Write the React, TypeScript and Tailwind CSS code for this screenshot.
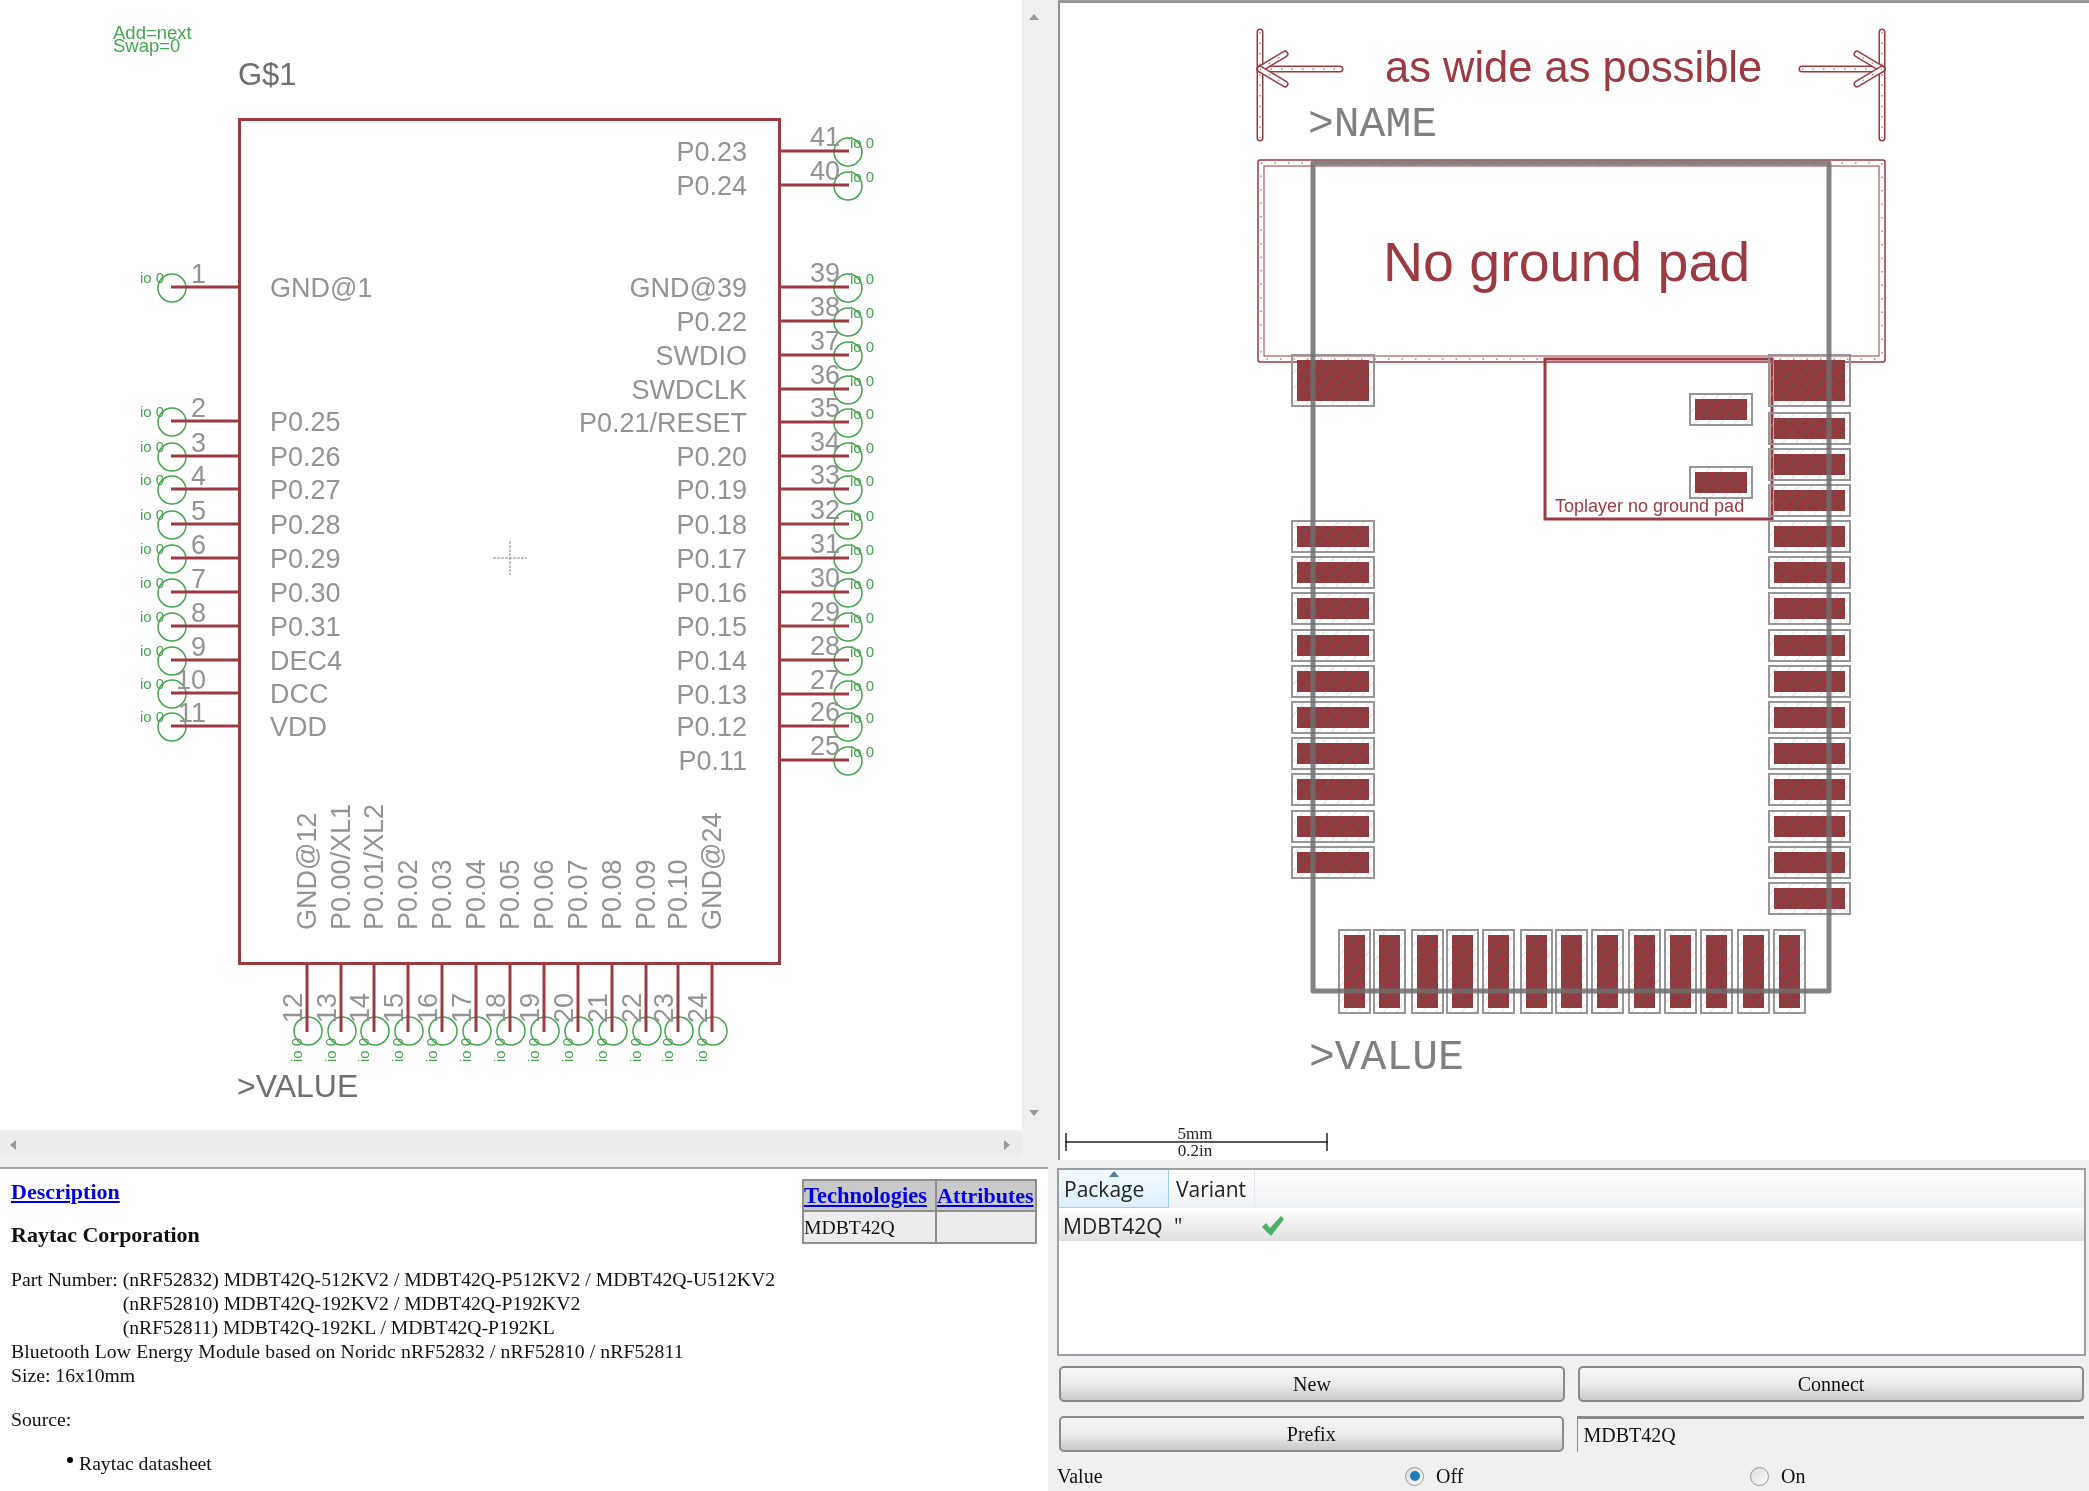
const RED = "#9c3a41";
const GREEN = "#45a64f";
const GREY = "#939393";

const rightTop = [
  { n: 41, y: 151, label: "P0.23" },
  { n: 40, y: 185, label: "P0.24" },
  { n: 39, y: 287, label: "GND@39" },
  { n: 38, y: 321, label: "P0.22" },
  { n: 37, y: 355, label: "SWDIO" },
  { n: 36, y: 389, label: "SWDCLK" },
  { n: 35, y: 422, label: "P0.21/RESET" },
  { n: 34, y: 456, label: "P0.20" },
  { n: 33, y: 489, label: "P0.19" },
  { n: 32, y: 524, label: "P0.18" },
  { n: 31, y: 558, label: "P0.17" },
  { n: 30, y: 592, label: "P0.16" },
  { n: 29, y: 626, label: "P0.15" },
  { n: 28, y: 660, label: "P0.14" },
  { n: 27, y: 694, label: "P0.13" },
  { n: 26, y: 726, label: "P0.12" },
  { n: 25, y: 760, label: "P0.11" },
];

const leftPins = [
  { n: 1, y: 287, label: "GND@1" },
  { n: 2, y: 421, label: "P0.25" },
  { n: 3, y: 456, label: "P0.26" },
  { n: 4, y: 489, label: "P0.27" },
  { n: 5, y: 524, label: "P0.28" },
  { n: 6, y: 558, label: "P0.29" },
  { n: 7, y: 592, label: "P0.30" },
  { n: 8, y: 626, label: "P0.31" },
  { n: 9, y: 660, label: "DEC4" },
  { n: 10, y: 693, label: "DCC" },
  { n: 11, y: 726, label: "VDD" },
];

const bottomPins = [
  { n: 12, x: 307, label: "GND@12" },
  { n: 13, x: 341, label: "P0.00/XL1" },
  { n: 14, x: 374, label: "P0.01/XL2" },
  { n: 15, x: 408, label: "P0.02" },
  { n: 16, x: 442, label: "P0.03" },
  { n: 17, x: 476, label: "P0.04" },
  { n: 18, x: 510, label: "P0.05" },
  { n: 19, x: 544, label: "P0.06" },
  { n: 20, x: 578, label: "P0.07" },
  { n: 21, x: 612, label: "P0.08" },
  { n: 22, x: 646, label: "P0.09" },
  { n: 23, x: 678, label: "P0.10" },
  { n: 24, x: 712, label: "GND@24" },
];

function Schematic() {
  return (
    <svg width="1022" height="1130" viewBox="0 0 1022 1130" className="block font-['Liberation_Sans',sans-serif]">
      <text x="113" y="39" fontSize="18.5" fill={GREEN}>Add=next</text>
      <text x="113" y="52" fontSize="18.5" fill={GREEN}>Swap=0</text>
      <text x="238" y="85" fontSize="31" fill="#6f6f6f">G$1</text>
      <text x="237" y="1097" fontSize="32" fill="#6f6f6f">&gt;VALUE</text>

      {rightTop.map((p) => (
        <g key={p.n}>
          <circle cx="848" cy={p.y + 1} r="14" fill="none" stroke={GREEN} strokeWidth="1.5" />
          <line x1="780" y1={p.y} x2="849" y2={p.y} stroke={RED} strokeWidth="3" />
          <text x="840" y={p.y - 5} fontSize="27" textAnchor="end" fill={GREY}>{p.n}</text>
          <text x="850" y={p.y - 3} fontSize="15" fill={GREEN}>io 0</text>
          <text x="747" y={p.y + 10} fontSize="27" textAnchor="end" fill={GREY}>{p.label}</text>
        </g>
      ))}

      {leftPins.map((p) => (
        <g key={p.n}>
          <circle cx="172" cy={p.y + 1} r="14" fill="none" stroke={GREEN} strokeWidth="1.5" />
          <line x1="171" y1={p.y} x2="239" y2={p.y} stroke={RED} strokeWidth="3" />
          <text x="206" y={p.y - 4} fontSize="27" textAnchor="end" fill={GREY}>{p.n}</text>
          <text x="140" y={p.y - 4} fontSize="15" fill={GREEN}>io 0</text>
          <text x="270" y={p.y + 10} fontSize="27" fill={GREY}>{p.label}</text>
        </g>
      ))}

      {bottomPins.map((p) => (
        <g key={p.n}>
          <circle cx={p.x + 1} cy="1031" r="14" fill="none" stroke={GREEN} strokeWidth="1.5" />
          <line x1={p.x} y1="964" x2={p.x} y2="1032" stroke={RED} strokeWidth="3" />
          <text x={p.x - 5} y="1023" fontSize="27" fill={GREY} transform={`rotate(-90 ${p.x - 5} 1023)`}>{p.n}</text>
          <text x={p.x - 5} y="1062" fontSize="15" fill={GREEN} transform={`rotate(-90 ${p.x - 5} 1062)`}>io 0</text>
          <text x={p.x + 9} y="930" fontSize="27" fill={GREY} transform={`rotate(-90 ${p.x + 9} 930)`}>{p.label}</text>
        </g>
      ))}

      <rect x="239.5" y="119.5" width="540" height="844" fill="none" stroke={RED} strokeWidth="3" />
      <line x1="493" y1="558" x2="527" y2="558" stroke="#8a8a8a" strokeWidth="1" strokeDasharray="3 1" />
      <line x1="510" y1="541" x2="510" y2="575" stroke="#8a8a8a" strokeWidth="1" strokeDasharray="3 1" />
    </svg>
  );
}

const rightPadY = [428, 464, 500, 536, 572, 608, 645, 681, 717, 753, 789, 826, 862, 898];
const leftPadY = [536, 572, 608, 645, 681, 717, 753, 789, 826, 862];
const bottomPadX = [1354, 1389, 1427, 1462, 1498, 1536, 1571, 1607, 1644, 1680, 1716, 1753, 1789];

function Pad({ x, y, w, h, m = 5 }: { x: number; y: number; w: number; h: number; m?: number }) {
  return (
    <g>
      <rect x={x} y={y} width={w} height={h} fill="url(#hatch-light)" stroke="#969696" strokeWidth="2" />
      <rect x={x + m} y={y + m} width={w - m * 2} height={h - m * 2} fill="#943a3f" />
      <rect x={x + m} y={y + m} width={w - m * 2} height={h - m * 2} fill="url(#hatch-dark)" />
    </g>
  );
}

// outlined wire on the dimension layer
function DimLine({ x1, y1, x2, y2, w = 7 }: { x1: number; y1: number; x2: number; y2: number; w?: number }) {
  return (
    <g>
      <line x1={x1} y1={y1} x2={x2} y2={y2} stroke={RED} strokeWidth={w} strokeLinecap="round" />
      <line x1={x1} y1={y1} x2={x2} y2={y2} stroke="#ffffff" strokeWidth={w - 3} strokeLinecap="round" />
      <line x1={x1} y1={y1} x2={x2} y2={y2} stroke={RED} strokeWidth="1" strokeDasharray="1.5 9" />
    </g>
  );
}

function PackageView() {
  return (
    <svg width="1029" height="1157" viewBox="1060 3 1029 1157" className="block font-['Liberation_Sans',sans-serif]">
      <defs>
        <pattern id="hatch-dark" patternUnits="userSpaceOnUse" width="10" height="10" patternTransform="rotate(40)">
          <line x1="0" y1="0" x2="0" y2="10" stroke="#6f4f4f" strokeWidth="3" />
        </pattern>
        <pattern id="hatch-light" patternUnits="userSpaceOnUse" width="10" height="10" patternTransform="rotate(40)">
          <line x1="0" y1="0" x2="0" y2="10" stroke="#c2c2c2" strokeWidth="1" />
        </pattern>
      </defs>

      <DimLine x1={1260} y1={32} x2={1260} y2={138} />
      <DimLine x1={1882} y1={32} x2={1882} y2={138} />
      <DimLine x1={1260} y1={69} x2={1340} y2={69} />
      <DimLine x1={1260} y1={69} x2={1285} y2={54} />
      <DimLine x1={1260} y1={69} x2={1285} y2={84} />
      <DimLine x1={1802} y1={69} x2={1882} y2={69} />
      <DimLine x1={1882} y1={69} x2={1857} y2={54} />
      <DimLine x1={1882} y1={69} x2={1857} y2={84} />

      <text x="1385" y="82" fontSize="43.5" fill={RED}>as wide as possible</text>
      <text x="1308" y="136" fontSize="43" fill="#808080" className="font-['Liberation_Mono',monospace]">&gt;NAME</text>

      <rect x="1258" y="160" width="627" height="202" rx="2" fill="none" stroke={RED} strokeWidth="1.5" />
      <rect x="1261" y="163" width="621" height="196" fill="none" stroke={RED} strokeWidth="1" strokeDasharray="1.5 12" />
      <rect x="1264" y="166" width="615" height="190" fill="none" stroke={RED} strokeWidth="1" />

      <text x="1383" y="281" fontSize="55.5" fill={RED}>No ground pad</text>
      <rect x="1545" y="359" width="227" height="160" fill="none" stroke={RED} strokeWidth="3" />
      <text x="1555" y="512" fontSize="18" fill={RED}>Toplayer no ground pad</text>

      <Pad x={1292} y={355} w={82} h={51} />
      <Pad x={1769} y={355} w={81} h={51} />
      <Pad x={1690} y={394} w={62} h={31} />
      <Pad x={1690} y={467} w={62} h={31} />
      {rightPadY.map((y) => (
        <Pad key={y} x={1769} y={y - 15} w={81} h={31} />
      ))}
      {leftPadY.map((y) => (
        <Pad key={y} x={1292} y={y - 15} w={82} h={31} />
      ))}
      {bottomPadX.map((x) => (
        <Pad key={x} x={x - 15} y={930} w={31} h={83} />
      ))}

      <path d="M1313 163 H1829 V991 H1313 Z" fill="none" stroke="#6f6f6f" strokeOpacity="0.85" strokeWidth="5" strokeLinejoin="round" />

      <text x="1309" y="1069" fontSize="43" fill="#808080" className="font-['Liberation_Mono',monospace]">&gt;VALUE</text>

      <line x1="1065" y1="1142" x2="1328" y2="1142" stroke="#222" strokeWidth="1.5" />
      <line x1="1066" y1="1133" x2="1066" y2="1151" stroke="#222" strokeWidth="1.5" />
      <line x1="1327" y1="1133" x2="1327" y2="1151" stroke="#222" strokeWidth="1.5" />
      <text x="1195" y="1139" fontSize="17" textAnchor="middle" fill="#222" className="font-['Liberation_Serif',serif]">5mm</text>
      <text x="1195" y="1156" fontSize="17" textAnchor="middle" fill="#222" className="font-['Liberation_Serif',serif]">0.2in</text>
    </svg>
  );
}

function Arrow({ dir }: { dir: "up" | "down" | "left" | "right" }) {
  const d = {
    up: "M6 2 L11 8 H1 Z",
    down: "M6 10 L11 4 H1 Z",
    left: "M2 6 L8 1 V11 Z",
    right: "M10 6 L4 1 V11 Z",
  }[dir];
  return (
    <svg width="12" height="12" viewBox="0 0 12 12">
      <path d={d} fill="#9a9a9a" />
    </svg>
  );
}

function DescriptionPanel() {
  return (
    <div className="flex w-[1048px] flex-1 justify-between border-t-2 border-[#a6a6a6] bg-white font-['Liberation_Serif',serif] text-[19.7px] leading-[24px] text-[#111]">
      <div className="pl-[11px] pt-[11px]">
        <div className="text-[22px] font-bold text-[#0000ee] underline">Description</div>
        <div className="mt-[19px] text-[22px] font-bold">Raytac Corporation</div>
        <div className="mt-[20px] flex gap-[5px]">
          <span>Part Number:</span>
          <div>
            <div>(nRF52832) MDBT42Q-512KV2 / MDBT42Q-P512KV2 / MDBT42Q-U512KV2</div>
            <div>(nRF52810) MDBT42Q-192KV2 / MDBT42Q-P192KV2</div>
            <div>(nRF52811) MDBT42Q-192KL / MDBT42Q-P192KL</div>
          </div>
        </div>
        <div className="tracking-[0.11px]">Bluetooth Low Energy Module based on Noridc nRF52832 / nRF52810 / nRF52811</div>
        <div>Size: 16x10mm</div>
        <div className="mt-[20px]">Source:</div>
        <div className="mt-[20px] flex items-start gap-[6px] pl-[56px]">
          <span className="mt-[6px] h-[6px] w-[6px] rounded-full bg-black" />
          <span>Raytac datasheet</span>
        </div>
      </div>
      <div className="mr-[11px] mt-[10px] grid h-[65px] w-[235px] grid-cols-[133px_1fr] grid-rows-[31px_1fr] border-2 border-[#8f8f8f] bg-[#ececec]">
        <div className="border-b-2 border-r-2 border-[#8f8f8f] bg-[#c9c9c9] text-[22.5px] font-bold leading-[30px] text-[#0000ee] underline">Technologies</div>
        <div className="border-b-2 border-[#8f8f8f] bg-[#c9c9c9] text-[22px] font-bold leading-[30px] text-[#0000ee] underline">Attributes</div>
        <div className="border-r-2 border-[#8f8f8f] leading-[30px]">MDBT42Q</div>
        <div />
      </div>
    </div>
  );
}

function VariantTable() {
  return (
    <div className="ml-[-1px] mr-[3px] mt-[8px] h-[192px] border-2 border-[#9aa0a5] bg-white font-['Open_Sans',sans-serif] text-[21px] text-[#222]">
      <div className="flex h-[38px] bg-linear-to-b from-white to-[#eef1f4] leading-[38px]">
        <div className="relative w-[110px] border-r border-b border-[#9fd0ef] bg-linear-to-b from-[#f3fafe] to-[#dceffb] pl-[5px]">
          Package
          <svg width="10" height="6" viewBox="0 0 10 6" className="absolute left-[50px] top-[1px]">
            <path d="M5 0 L10 6 H0 Z" fill="#4d7fa3" />
          </svg>
        </div>
        <div className="w-[86px] border-r border-[#e4e7ea] pl-[7px]">Variant</div>
      </div>
      <div className="mt-[4px] flex h-[29px] items-center bg-linear-to-b from-[#fafafa] to-[#e0e0e0] pl-[4px]">
        <span className="w-[111px]">MDBT42Q</span>
        <span className="w-[86px]">"</span>
        <svg width="26" height="24" viewBox="0 0 26 24">
          <path d="M2 13 L6 9 L10 14 L21 2 L24 5 L11 22 Z" fill="#4caf63" />
        </svg>
      </div>
    </div>
  );
}

function Btn({ children }: { children: string }) {
  return (
    <button className="h-[36px] flex-1 rounded-[5px] border-2 border-[#8a8a8a] bg-linear-to-b from-[#f6f6f6] via-[#ececec] to-[#c8c8c8] text-center text-[20px] text-[#111]">
      {children}
    </button>
  );
}

function Radio({ on }: { on?: boolean }) {
  return (
    <span className="flex h-[19px] w-[19px] items-center justify-center rounded-full border border-[#9a9a9a] bg-linear-to-br from-[#dcdcdc] to-[#fdfdfd]">
      {on && <span className="h-[10px] w-[10px] rounded-full bg-[#1f7fb8]" />}
    </span>
  );
}

export default function App() {
  return (
    <div className="flex h-[1491px] w-[2089px] overflow-hidden bg-[#f0f0f0] blur-[0.4px]">
      <div className="flex w-[1058px] flex-col">
        <div className="flex">
          <div className="bg-white">
            <Schematic />
          </div>
          <div className="flex h-[1130px] w-[36px] flex-col items-center justify-between bg-[#efefef] pl-[2px] pb-[12px] pt-[12px] pr-[14px]">
            <Arrow dir="up" />
            <Arrow dir="down" />
          </div>
        </div>
        <div className="mb-[10px] mt-[2px] flex h-[25px] w-[1022px] items-center justify-between bg-[#ececec] pl-[8px] pr-[10px]">
          <Arrow dir="left" />
          <Arrow dir="right" />
        </div>
        <DescriptionPanel />
      </div>

      <div className="flex flex-1 flex-col">
        <div className="h-[3px] bg-[#9a9a9a]" />
        <div className="h-[1157px] border-l-2 border-[#8f8f8f] bg-white">
          <PackageView />
        </div>
        <VariantTable />
        <div className="flex-1 pl-[1px] pr-[5px] font-['Liberation_Serif',serif] text-[20px] text-[#111]">
          <div className="mt-[10px] flex gap-[13px]">
            <Btn>New</Btn>
            <Btn>Connect</Btn>
          </div>
          <div className="mt-[14px] flex gap-[13px]">
            <Btn>Prefix</Btn>
            <div className="h-[36px] flex-1 border-l border-t-[3px] border-[#8a8a8a] bg-[#f0f0f0] pl-[6px] leading-[32px]">MDBT42Q</div>
          </div>
          <div className="ml-[-2px] mt-[9px] flex items-center">
            <span className="w-[348px] leading-[24px]">Value</span>
            <div className="flex w-[345px] items-center gap-[12px]">
              <Radio on />
              <span>Off</span>
            </div>
            <div className="flex items-center gap-[12px]">
              <Radio />
              <span>On</span>
            </div>
          </div>
        </div>
      </div>
    </div>
  );
}
